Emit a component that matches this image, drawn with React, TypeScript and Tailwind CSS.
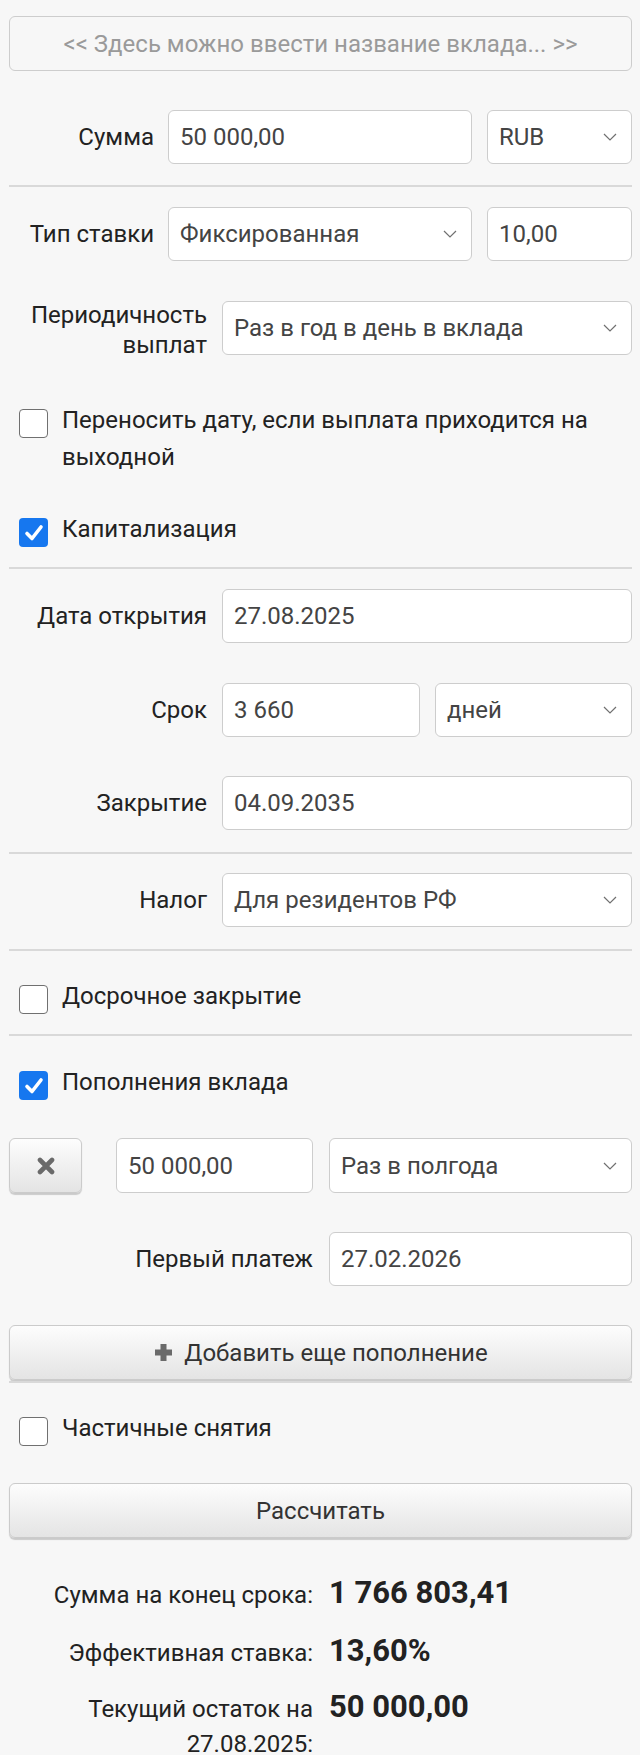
import React from "react";

const Chevron = () => (
  <svg width="14" height="8" viewBox="0 0 14 8" className="shrink-0">
    <polyline points="1,1 7,7 13,1" fill="none" stroke="#707070" strokeWidth="1.2" />
  </svg>
);

const inputCls =
  "h-[54px] flex items-center bg-white border-[1.5px] border-[#cdcdcd] rounded-[6px] pl-[11px] pr-[14px] text-[24px] text-[#444]";

const Field = ({ value, className = "" }: { value: string; className?: string }) => (
  <div className={`${inputCls} ${className}`}>
    <span className="whitespace-nowrap">{value}</span>
  </div>
);

const Select = ({ value, className = "" }: { value: string; className?: string }) => (
  <div className={`${inputCls} justify-between ${className}`}>
    <span className="whitespace-nowrap">{value}</span>
    <Chevron />
  </div>
);

const Divider = ({ className = "" }: { className?: string }) => (
  <div className={`h-[2px] bg-[#d9d9d9] ${className}`} />
);

const CheckBox = ({ checked, children, className = "" }: { checked?: boolean; children: React.ReactNode; className?: string }) => (
  <div className={`flex items-start leading-[37px] text-[24px] text-[#222] ${className}`}>
    {checked ? (
      <div className="mt-[7px] ml-[10px] w-[29px] h-[29px] rounded-[4px] bg-[#1677ef] flex items-center justify-center shrink-0">
        <svg width="20" height="18" viewBox="0 0 20 18">
          <path d="M3 9.5 L8 14.5 L17 3" fill="none" stroke="white" strokeWidth="3.6" strokeLinecap="round" strokeLinejoin="round" />
        </svg>
      </div>
    ) : (
      <div className="mt-[7px] ml-[10px] w-[29px] h-[29px] rounded-[4px] bg-white border-[1.5px] border-[#707070] shrink-0" />
    )}
    <div className="ml-[14px]">{children}</div>
  </div>
);

const btnCls =
  "h-[55px] flex items-center justify-center rounded-[6px] border-[1.5px] border-[#cbcbcb] bg-gradient-to-b from-[#fdfdfd] to-[#e4e4e4] shadow-[0_1.5px_1px_rgba(0,0,0,0.18)] text-[24px] text-[#333]";

export default function App() {
  return (
    <div
      className="min-h-[1755px] bg-[#f7f7f7] pl-[9px] pr-[8px] flex flex-col"
      style={{ fontFamily: "Roboto, 'Noto Sans', sans-serif" }}
    >
      {/* Title */}
      <div className="mt-[16px] h-[55px] flex items-center justify-center border-[1.5px] border-[#cdcdcd] rounded-[6px] text-[24px] text-[#9a9a9a]">
        &lt;&lt; Здесь можно ввести название вклада... &gt;&gt;
      </div>

      {/* Сумма */}
      <div className="mt-[39px] flex items-center">
        <div className="w-[145px] text-right text-[24px] text-[#222]">Сумма</div>
        <Field value="50 000,00" className="ml-[14px] w-[304px]" />
        <Select value="RUB" className="ml-[15px] flex-1" />
      </div>

      <Divider className="mt-[21px]" />

      {/* Тип ставки */}
      <div className="mt-[20px] flex items-center">
        <div className="w-[145px] text-right text-[24px] text-[#222] whitespace-nowrap">Тип ставки</div>
        <Select value="Фиксированная" className="ml-[14px] w-[304px]" />
        <Field value="10,00" className="ml-[15px] flex-1" />
      </div>

      {/* Периодичность */}
      <div className="mt-[40px] h-[54px] flex items-center">
        <div className="w-[198px] text-right text-[24px] leading-[30px] text-[#222] mt-[4px]">
          Периодичность
          <br />
          выплат
        </div>
        <Select value="Раз в год в день в вклада" className="ml-[15px] flex-1" />
      </div>

      <CheckBox className="mt-[47px]">
        Переносить дату, если выплата приходится на
        <br />
        выходной
      </CheckBox>

      <CheckBox checked className="mt-[35px]">
        Капитализация
      </CheckBox>

      <Divider className="mt-[19px]" />

      {/* Дата открытия */}
      <div className="mt-[20px] flex items-center">
        <div className="w-[198px] text-right text-[24px] text-[#222]">Дата открытия</div>
        <Field value="27.08.2025" className="ml-[15px] flex-1" />
      </div>

      {/* Срок */}
      <div className="mt-[40px] flex items-center">
        <div className="w-[198px] text-right text-[24px] text-[#222]">Срок</div>
        <Field value="3 660" className="ml-[15px] w-[198px]" />
        <Select value="дней" className="ml-[15px] flex-1" />
      </div>

      {/* Закрытие */}
      <div className="mt-[39px] flex items-center">
        <div className="w-[198px] text-right text-[24px] text-[#222]">Закрытие</div>
        <Field value="04.09.2035" className="ml-[15px] flex-1" />
      </div>

      <Divider className="mt-[22px]" />

      {/* Налог */}
      <div className="mt-[19px] flex items-center">
        <div className="w-[198px] text-right text-[24px] text-[#222]">Налог</div>
        <Select value="Для резидентов РФ" className="ml-[15px] flex-1" />
      </div>

      <Divider className="mt-[22px]" />

      <CheckBox className="mt-[27px]">Досрочное закрытие</CheckBox>

      <Divider className="mt-[19px]" />

      <CheckBox checked className="mt-[28px]">
        Пополнения вклада
      </CheckBox>

      {/* Replenishment row */}
      <div className="mt-[37px] flex items-center">
        <div className={`${btnCls} w-[73px]`}>
          <svg width="18" height="18" viewBox="0 0 18 18">
            <path d="M3 3 L15 15 M15 3 L3 15" stroke="#6a6a6a" strokeWidth="4.6" strokeLinecap="round" />
          </svg>
        </div>
        <Field value="50 000,00" className="ml-[34px] w-[197px] h-[55px]" />
        <Select value="Раз в полгода" className="ml-[16px] flex-1 h-[55px]" />
      </div>

      {/* Первый платеж */}
      <div className="mt-[39px] flex items-center">
        <div className="w-[304px] text-right text-[24px] text-[#222]">Первый платеж</div>
        <Field value="27.02.2026" className="ml-[16px] flex-1" />
      </div>

      {/* Добавить */}
      <div className={`${btnCls} mt-[39px]`}>
        <svg width="21" height="21" viewBox="0 0 21 21" className="mr-[10px]">
          <path d="M10.5 2 V19 M2 10.5 H19" stroke="#6a6a6a" strokeWidth="6" />
        </svg>
        <span>Добавить еще пополнение</span>
      </div>

      <Divider className="mt-[1px]" />

      <CheckBox className="mt-[27px]">Частичные снятия</CheckBox>

      {/* Рассчитать */}
      <div className={`${btnCls} mt-[36px]`}>Рассчитать</div>

      {/* Results */}
      <div className="mt-[36px] flex items-baseline">
        <div className="w-[304px] text-right text-[24px] leading-[37px] text-[#222]">Сумма на конец срока:</div>
        <div className="ml-[16px] text-[31px] font-bold text-[#222] leading-[37px]">1 766 803,41</div>
      </div>
      <div className="mt-[18px] flex items-baseline">
        <div className="w-[304px] text-right text-[24px] leading-[37px] text-[#222]">Эффективная ставка:</div>
        <div className="ml-[16px] text-[31px] font-bold text-[#222] leading-[37px]">13,60%</div>
      </div>
      <div className="mt-[17px] flex items-baseline">
        <div className="w-[304px] text-right text-[24px] leading-[35px] text-[#222]">
          Текущий остаток на
          <br />
          27.08.2025:
        </div>
        <div className="ml-[16px] text-[31px] font-bold text-[#222] leading-[35px]">50 000,00</div>
      </div>
    </div>
  );
}
